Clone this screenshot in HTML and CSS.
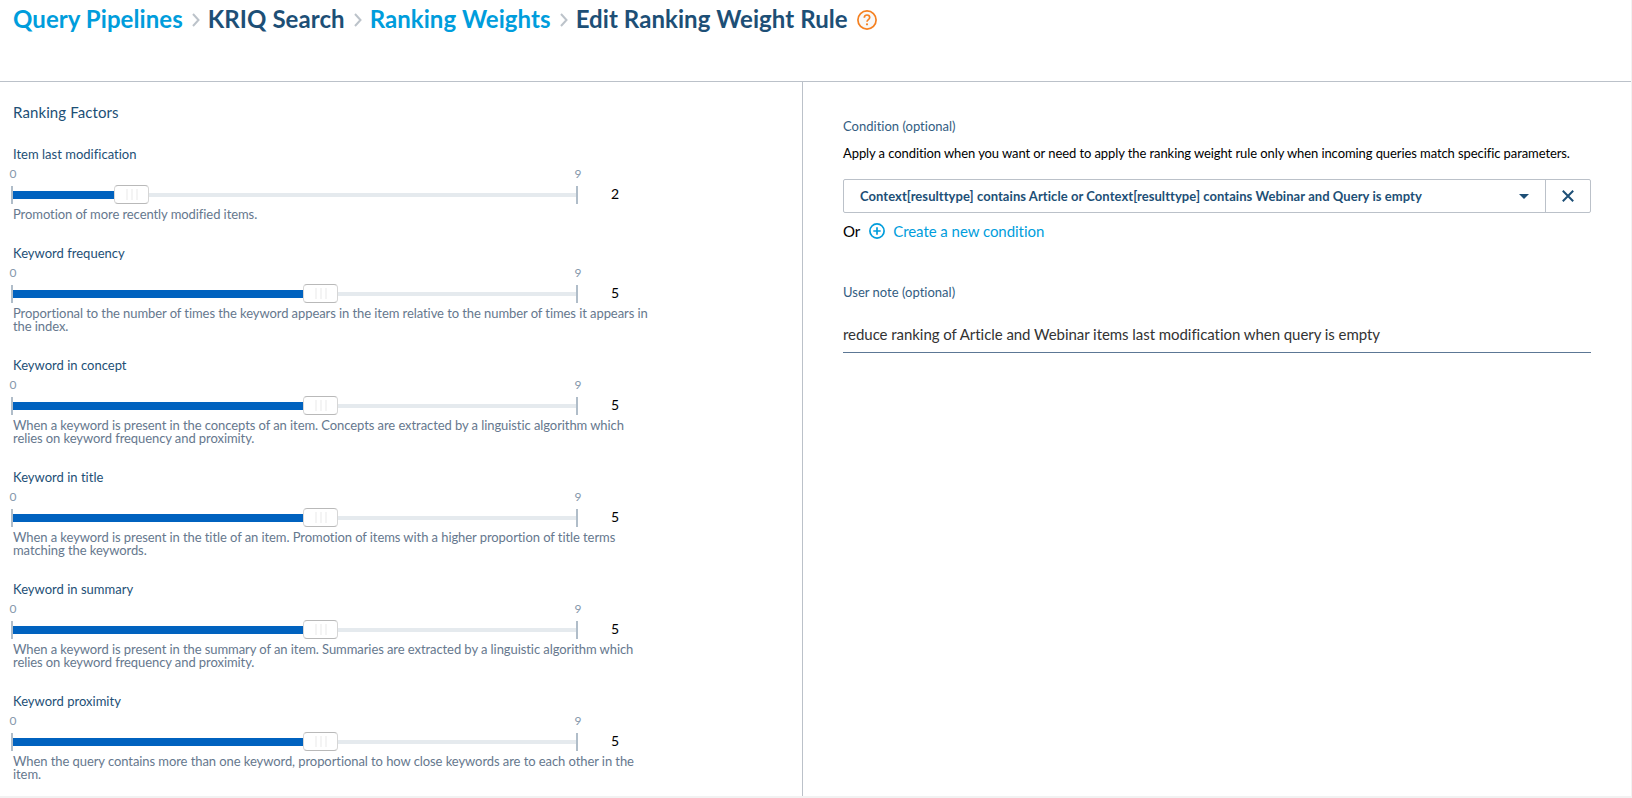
FILE: index.html
```html
<!DOCTYPE html>
<html lang="en">
<head>
<meta charset="utf-8">
<title>Edit Ranking Weight Rule</title>
<link rel="stylesheet" href="styles.css">
</head>
<body>
<div class="page">
  <header class="header">
    <a class="crumb link">Query Pipelines</a>
    <svg class="chevron" viewBox="0 0 8 14"><path d="M1 1l5.5 6L1 13"/></svg>
    <span class="crumb">KRIQ Search</span>
    <svg class="chevron" viewBox="0 0 8 14"><path d="M1 1l5.5 6L1 13"/></svg>
    <a class="crumb link">Ranking Weights</a>
    <svg class="chevron" viewBox="0 0 8 14"><path d="M1 1l5.5 6L1 13"/></svg>
    <span class="crumb">Edit Ranking Weight Rule</span>
    <svg class="help" viewBox="0 0 20 20"><circle class="disc" cx="10" cy="10" r="9.1"/><path d="M7.3 7.8C7.3 6 8.5 5 10 5s2.7 1 2.7 2.5c0 2-2.7 2.1-2.7 4.3"/><circle class="dot" cx="10" cy="14.3" r="1.1"/></svg>
  </header>
  <main class="main">
    <section class="factors">
      <h2 class="title">Ranking Factors</h2>
      <div class="factor">
        <div class="label">Item last modification</div>
        <div class="scale"><span>0</span><span>9</span></div>
        <div class="row"><div class="slider"><div class="fill" style="width:101px"></div><div class="handle"><i></i><i></i><i></i></div><div class="rest"></div></div><span class="value">2</span></div>
        <p class="desc">Promotion of more recently modified items.</p>
      </div>
      <div class="factor">
        <div class="label">Keyword frequency</div>
        <div class="scale"><span>0</span><span>9</span></div>
        <div class="row"><div class="slider"><div class="fill" style="width:290px"></div><div class="handle"><i></i><i></i><i></i></div><div class="rest"></div></div><span class="value">5</span></div>
        <p class="desc">Proportional to the number of times the keyword appears in the item relative to the number of times it appears in<br>the index.</p>
      </div>
      <div class="factor">
        <div class="label">Keyword in concept</div>
        <div class="scale"><span>0</span><span>9</span></div>
        <div class="row"><div class="slider"><div class="fill" style="width:290px"></div><div class="handle"><i></i><i></i><i></i></div><div class="rest"></div></div><span class="value">5</span></div>
        <p class="desc">When a keyword is present in the concepts of an item. Concepts are extracted by a linguistic algorithm which<br>relies on keyword frequency and proximity.</p>
      </div>
      <div class="factor">
        <div class="label">Keyword in title</div>
        <div class="scale"><span>0</span><span>9</span></div>
        <div class="row"><div class="slider"><div class="fill" style="width:290px"></div><div class="handle"><i></i><i></i><i></i></div><div class="rest"></div></div><span class="value">5</span></div>
        <p class="desc">When a keyword is present in the title of an item. Promotion of items with a higher proportion of title terms<br>matching the keywords.</p>
      </div>
      <div class="factor">
        <div class="label">Keyword in summary</div>
        <div class="scale"><span>0</span><span>9</span></div>
        <div class="row"><div class="slider"><div class="fill" style="width:290px"></div><div class="handle"><i></i><i></i><i></i></div><div class="rest"></div></div><span class="value">5</span></div>
        <p class="desc">When a keyword is present in the summary of an item. Summaries are extracted by a linguistic algorithm which<br>relies on keyword frequency and proximity.</p>
      </div>
      <div class="factor">
        <div class="label">Keyword proximity</div>
        <div class="scale"><span>0</span><span>9</span></div>
        <div class="row"><div class="slider"><div class="fill" style="width:290px"></div><div class="handle"><i></i><i></i><i></i></div><div class="rest"></div></div><span class="value">5</span></div>
        <p class="desc">When the query contains more than one keyword, proportional to how close keywords are to each other in the<br>item.</p>
      </div>
    </section>
    <section class="settings">
      <div class="label soft">Condition (optional)</div>
      <p class="hint">Apply a condition when you want or need to apply the ranking weight rule only when incoming queries match specific parameters.</p>
      <div class="select">
        <div class="selected"><span>Context[resulttype] contains Article or Context[resulttype] contains Webinar and Query is empty</span><svg class="caret" viewBox="0 0 10 5"><path d="M0 0h10L5 5z"/></svg></div>
        <div class="clear"><svg viewBox="0 0 12 12"><path d="M.8.8l10.4 10.4M11.2.8L.8 11.2"/></svg></div>
      </div>
      <div class="create"><span>Or</span><svg viewBox="0 0 16 16"><circle cx="8" cy="8" r="7.1"/><path d="M8 4.3v7.4M4.3 8h7.4"/></svg><a class="link">Create a new condition</a></div>
      <div class="label soft note-label">User note (optional)</div>
      <div class="note">reduce ranking of Article and Webinar items last modification when query is empty</div>
    </section>
  </main>
</div>
</body>
</html>
```
FILE: styles.css
```css
* { box-sizing: border-box; }
body { margin: 0; background: #fff; color: #000; font-family: Lato, sans-serif; font-size: 13px; }
p, h2 { margin: 0; font-weight: 400; }
.page { width: 1632px; height: 798px; overflow: hidden; display: flex; flex-direction: column; border-right: 1px solid #f2f2f2; border-bottom: 2px solid #f2f2f2; white-space: nowrap; }
.header { height: 82px; flex: none; display: flex; align-items: flex-start; padding: 4px 0 0 13px; border-bottom: 1px solid #bbc1c9; }
.crumb { font-size: 24px; line-height: 30px; font-weight: 700; color: #1d4f76; letter-spacing: .07px; }
.link { color: #009ddc; }
.chevron { width: 8px; height: 14px; margin: 9px 8px 0 9px; fill: none; stroke: #bcc3ca; stroke-width: 2; }
.help { width: 20px; height: 20px; margin: 6px 0 0 9px; fill: none; stroke: #f58020; stroke-width: 1.7; }
.help .disc { fill: #f8f8f8; }
.help .dot { fill: #f58020; stroke: none; }
.main { flex: 1; display: flex; min-height: 0; }
.factors { width: 803px; padding: 20px 0 0 13px; border-right: 1px solid #bbc1c9; }
.title { font-size: 15px; line-height: 20px; color: #1d4f76; margin-bottom: 24px; letter-spacing: .1px; }
.factor { padding-bottom: 24px; }
.label { font-size: 13px; line-height: 16px; color: #1d4f76; letter-spacing: .01px; }
.soft { color: #335d82; }
.scale { display: flex; justify-content: space-between; width: 572px; margin: 5px 0 0 -3.5px; font-size: 12px; line-height: 14px; color: #8598ab; }
.row { display: flex; align-items: center; height: 20px; margin: 4px 0 3px -2px; }
.slider { width: 567px; height: 18px; display: flex; align-items: center; border: solid #b0bdc9; border-width: 0 2px; }
.fill { height: 8px; background: #0062bf; }
.handle { width: 35px; height: 19px; flex: none; margin-top: -2px; display: flex; align-items: center; justify-content: center; gap: 3px; border: 1px solid #d6d6d6; border-top-color: #b9b9b9; border-bottom-color: #b9b9b9; border-radius: 4px; background: #fff; }
.handle i { width: 2px; height: 11px; background: #f4f4f4; }
.rest { flex: 1; height: 4px; background: #e5eaee; }
.value { margin: -4px 0 0 33px; font-size: 14px; }
.desc { font-size: 13px; line-height: 13px; color: #66788e; letter-spacing: -.075px; }
.settings { padding: 36px 0 0 40px; }
.hint { margin-top: 11px; line-height: 16px; letter-spacing: -.085px; }
.select { width: 748px; height: 34px; margin-top: 18px; display: flex; border: 1px solid #bbc1c9; border-radius: 2px; }
.selected { flex: 1; display: flex; align-items: center; justify-content: space-between; padding: 0 16px; color: #1d4f76; font-weight: 700; letter-spacing: .06px; }
.caret { width: 10px; height: 5px; fill: #1d4f76; }
.clear { width: 45px; display: flex; align-items: center; justify-content: center; border-left: 1px solid #bbc1c9; }
.clear svg { width: 12px; height: 12px; fill: none; stroke: #1d4f76; stroke-width: 2; }
.create { display: flex; align-items: center; margin-top: 8px; height: 20px; font-size: 15px; letter-spacing: -.05px; }
.create svg { width: 16px; height: 16px; margin: 0 8px 0 9px; fill: none; stroke: #009ddc; stroke-width: 1.7; }
.note-label { margin-top: 43px; }
.note { width: 748px; height: 35px; margin-top: 18px; padding-top: 6px; font-size: 15px; line-height: 20px; color: #333; border-bottom: 1px solid #5c7795; letter-spacing: -.05px; }
```
